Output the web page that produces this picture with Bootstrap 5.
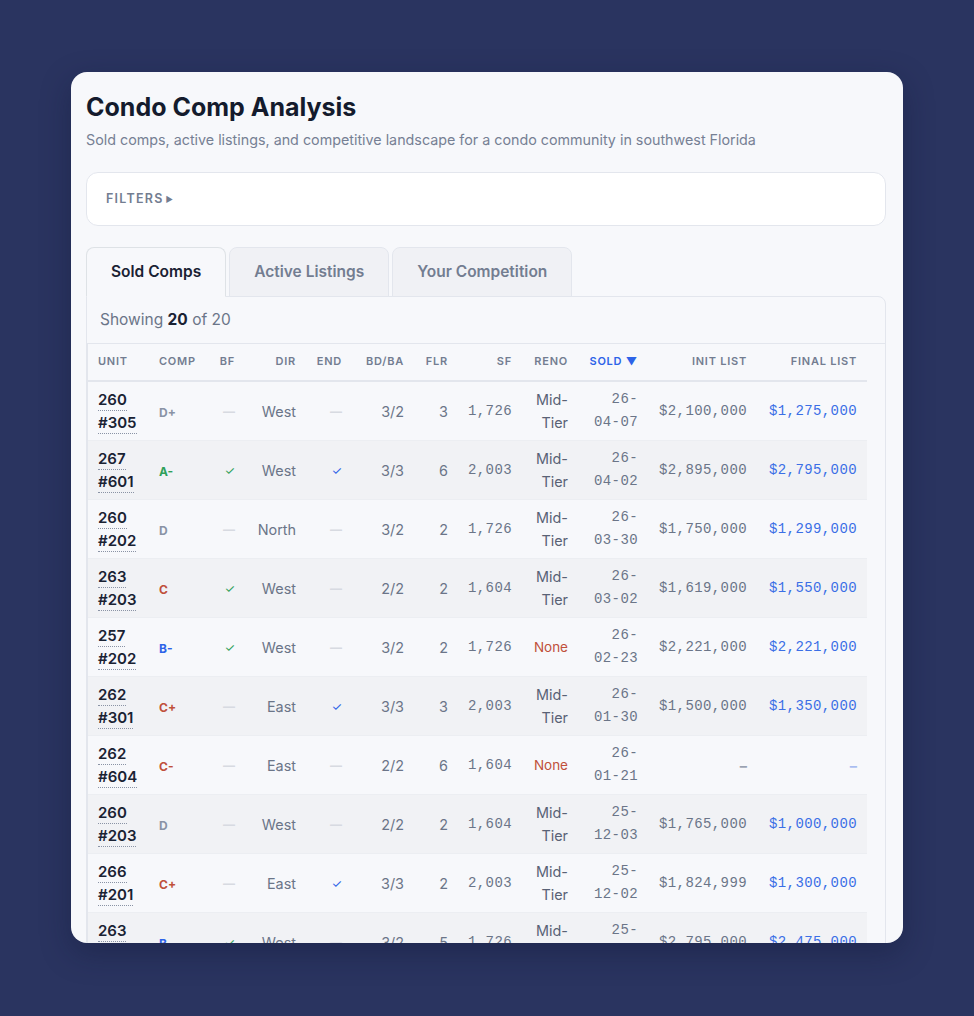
<!DOCTYPE html>
<html lang="en">
<head>
<meta charset="utf-8">
<title>Condo Comp Analysis</title>
<link href="https://cdn.jsdelivr.net/npm/bootstrap@5.3.0/dist/css/bootstrap.min.css" rel="stylesheet">
<style>
html,body{height:1016px;overflow:hidden}
body{background:#2a3460;font-family:Inter,"Liberation Sans",sans-serif;font-size:14.4px;line-height:1.56;color:#6b7588}
.sheet{margin:72px 71px 0;height:871px;background:#f7f8fb;border:0;border-radius:16px;overflow:hidden;padding:19px 17px 0 15px;box-shadow:0 10px 30px rgba(15,20,50,.35)}
.sheet h1{font-size:25px;font-weight:700;line-height:32px;color:#141b2d;margin:0 0 6px}
.sub{font-size:14.3px;line-height:22px;color:#768094;margin:0 0 21px}
.filterbox{height:54px;background:#fff;border:1px solid #e3e6ed;border-radius:12px;padding:0 19px;font-size:12.5px;font-weight:600;letter-spacing:.1em;color:#737d91}
.filterbox .tri{font-size:8px;letter-spacing:0;margin-left:2px}
.tabsrow{margin-top:21px;border-bottom:0;gap:3px;flex-wrap:nowrap}
.tabsrow .nav-link{height:50px;margin:0 0 -1px;padding:0 24px;background:#f0f1f5;border:1px solid #e3e6ed;border-radius:8px 8px 0 0;font-size:15.5px;font-weight:600;color:#737d91;line-height:48px}
.tabsrow .nav-link.active{background:#f7f8fb;color:#1a2233;border-bottom-color:#f7f8fb;position:relative;z-index:1}
.panel{background:#f7f8fb;border:1px solid #e3e6ed;border-radius:0 8px 0 0}
.countline{height:47px;padding:0 13px;font-size:15.5px;line-height:46px;color:#6b7588;border-bottom:1px solid #e3e6ed}
.countline b{color:#1a2233;font-weight:700}
.tablewrap{height:622px;overflow-y:scroll;overflow-x:hidden;border-left:1px solid #e3e6ed}
.tablewrap::-webkit-scrollbar{width:17px}
.tablewrap::-webkit-scrollbar-track{background:#f7f8fb;border-left:1px solid #e3e6ed}
.tablewrap::-webkit-scrollbar-thumb{background:#bcbcbc;border-radius:6px;border:3px solid transparent;border-left-width:4px;background-clip:padding-box}
.comps{table-layout:fixed;width:779px;margin:0;border-collapse:collapse;--bs-table-bg:transparent}
.comps th,.comps td{padding:6px 10px;text-align:right;vertical-align:middle;border-bottom:1px solid #eceef2;color:#6b7588;background:transparent;box-shadow:none}
.comps th{height:37px;font-size:11px;font-weight:600;letter-spacing:.07em;text-transform:uppercase;color:#737d91;border-bottom:2px solid #e3e6ed;white-space:nowrap;padding-top:0;padding-bottom:0}
.comps td{height:58.2px;line-height:23px}
.comps th:nth-child(-n+2),.comps td:nth-child(-n+2){text-align:left}
.comps th.sortcol{color:#2d63e8}
.comps tbody tr:nth-child(even) td{background:#f1f2f5}
.comps tbody tr.restrows td{height:582px;background:transparent;padding:0;border:0}
.c1{width:61px}.c2{width:60px}.c3{width:36px}.c4{width:61px}.c5{width:46px}.c6{width:62px}.c7{width:44px}.c8{width:64px}.c9{width:56px}.c10{width:70px}.c11{width:109px}.c12{width:110px}
.comps td.unitcell{font-size:15px;font-weight:600;color:#1a2233}
.unitlink{border-bottom:1px dotted #8a93a5;padding-bottom:1px}
.comps td.grade{font-size:12px;font-weight:700;padding-top:8px}
.comps td.gray{color:#8a93a5}.comps td.green{color:#2fa05a}.comps td.red{color:#c0503a}.comps td.blue{color:#2d63e8}
.comps td.mark{background:transparent}
.comps td.dash{color:#d7dae1;font-weight:700;font-size:12px}
.comps td.okg{color:#2fa05a;font-size:12px}
.comps td.okb{color:#2d63e8;font-size:12px}
.comps td.mono{font-family:"Liberation Mono",monospace;font-size:14px;letter-spacing:.4px}
.comps td.final{color:#3b6fe6}
.comps td.reno{color:#596275}
.comps td.none{color:#c0503a;font-size:13.5px}
.comps td.nil{color:#9aa2b1;font-weight:700}
.comps td.nilb{color:#a9bdf0;font-weight:700}
</style>
</head>
<body>
<div class="sheet">
  <h1>Condo Comp Analysis</h1>
  <p class="sub">Sold comps, active listings, and competitive landscape for a condo community in southwest Florida</p>
  <div class="filterbox d-flex align-items-center">FILTERS <span class="tri">&#9654;</span></div>
  <ul class="nav nav-tabs tabsrow">
    <li class="nav-item"><a class="nav-link active" href="#">Sold Comps</a></li>
    <li class="nav-item"><a class="nav-link" href="#">Active Listings</a></li>
    <li class="nav-item"><a class="nav-link" href="#">Your Competition</a></li>
  </ul>
  <div class="panel">
    <div class="countline">Showing <b>20</b> of 20</div>
    <div class="tablewrap">
      <table class="table comps">
        <colgroup><col class="c1"><col class="c2"><col class="c3"><col class="c4"><col class="c5"><col class="c6"><col class="c7"><col class="c8"><col class="c9"><col class="c10"><col class="c11"><col class="c12"></colgroup>
        <thead><tr><th>Unit</th><th>Comp</th><th>BF</th><th>Dir</th><th>End</th><th>BD/BA</th><th>Flr</th><th>SF</th><th>Reno</th><th class="sortcol">Sold &#9660;</th><th>Init List</th><th>Final List</th></tr></thead>
        <tbody>
          <tr><td class="unitcell"><span class="unitlink">260 #305</span></td><td class="grade gray">D+</td><td class="dash">&mdash;</td><td>West</td><td class="dash">&mdash;</td><td>3/2</td><td>3</td><td class="mono">1,726</td><td class="reno">Mid-Tier</td><td class="mono">26-04-07</td><td class="mono">$2,100,000</td><td class="mono final">$1,275,000</td></tr>
          <tr><td class="unitcell"><span class="unitlink">267 #601</span></td><td class="grade green">A-</td><td class="okg">&#10003;</td><td>West</td><td class="okb">&#10003;</td><td>3/3</td><td>6</td><td class="mono">2,003</td><td class="reno">Mid-Tier</td><td class="mono">26-04-02</td><td class="mono">$2,895,000</td><td class="mono final">$2,795,000</td></tr>
          <tr><td class="unitcell"><span class="unitlink">260 #202</span></td><td class="grade gray">D</td><td class="dash">&mdash;</td><td>North</td><td class="dash">&mdash;</td><td>3/2</td><td>2</td><td class="mono">1,726</td><td class="reno">Mid-Tier</td><td class="mono">26-03-30</td><td class="mono">$1,750,000</td><td class="mono final">$1,299,000</td></tr>
          <tr><td class="unitcell"><span class="unitlink">263 #203</span></td><td class="grade red">C</td><td class="okg">&#10003;</td><td>West</td><td class="dash">&mdash;</td><td>2/2</td><td>2</td><td class="mono">1,604</td><td class="reno">Mid-Tier</td><td class="mono">26-03-02</td><td class="mono">$1,619,000</td><td class="mono final">$1,550,000</td></tr>
          <tr><td class="unitcell"><span class="unitlink">257 #202</span></td><td class="grade blue">B-</td><td class="okg">&#10003;</td><td>West</td><td class="dash">&mdash;</td><td>3/2</td><td>2</td><td class="mono">1,726</td><td class="none">None</td><td class="mono">26-02-23</td><td class="mono">$2,221,000</td><td class="mono final">$2,221,000</td></tr>
          <tr><td class="unitcell"><span class="unitlink">262 #301</span></td><td class="grade red">C+</td><td class="dash">&mdash;</td><td>East</td><td class="okb">&#10003;</td><td>3/3</td><td>3</td><td class="mono">2,003</td><td class="reno">Mid-Tier</td><td class="mono">26-01-30</td><td class="mono">$1,500,000</td><td class="mono final">$1,350,000</td></tr>
          <tr><td class="unitcell"><span class="unitlink">262 #604</span></td><td class="grade red">C-</td><td class="dash">&mdash;</td><td>East</td><td class="dash">&mdash;</td><td>2/2</td><td>6</td><td class="mono">1,604</td><td class="none">None</td><td class="mono">26-01-21</td><td class="nil">&ndash;</td><td class="nilb">&ndash;</td></tr>
          <tr><td class="unitcell"><span class="unitlink">260 #203</span></td><td class="grade gray">D</td><td class="dash">&mdash;</td><td>West</td><td class="dash">&mdash;</td><td>2/2</td><td>2</td><td class="mono">1,604</td><td class="reno">Mid-Tier</td><td class="mono">25-12-03</td><td class="mono">$1,765,000</td><td class="mono final">$1,000,000</td></tr>
          <tr><td class="unitcell"><span class="unitlink">266 #201</span></td><td class="grade red">C+</td><td class="dash">&mdash;</td><td>East</td><td class="okb">&#10003;</td><td>3/3</td><td>2</td><td class="mono">2,003</td><td class="reno">Mid-Tier</td><td class="mono">25-12-02</td><td class="mono">$1,824,999</td><td class="mono final">$1,300,000</td></tr>
          <tr><td class="unitcell"><span class="unitlink">263 #505</span></td><td class="grade blue">B-</td><td class="okg">&#10003;</td><td>West</td><td class="dash">&mdash;</td><td>3/2</td><td>5</td><td class="mono">1,726</td><td class="reno">Mid-Tier</td><td class="mono">25-11-18</td><td class="mono">$2,795,000</td><td class="mono final">$2,475,000</td></tr>
          <tr class="restrows"><td colspan="12"></td></tr>
        </tbody>
      </table>
    </div>
  </div>
</div>
</body>
</html>
